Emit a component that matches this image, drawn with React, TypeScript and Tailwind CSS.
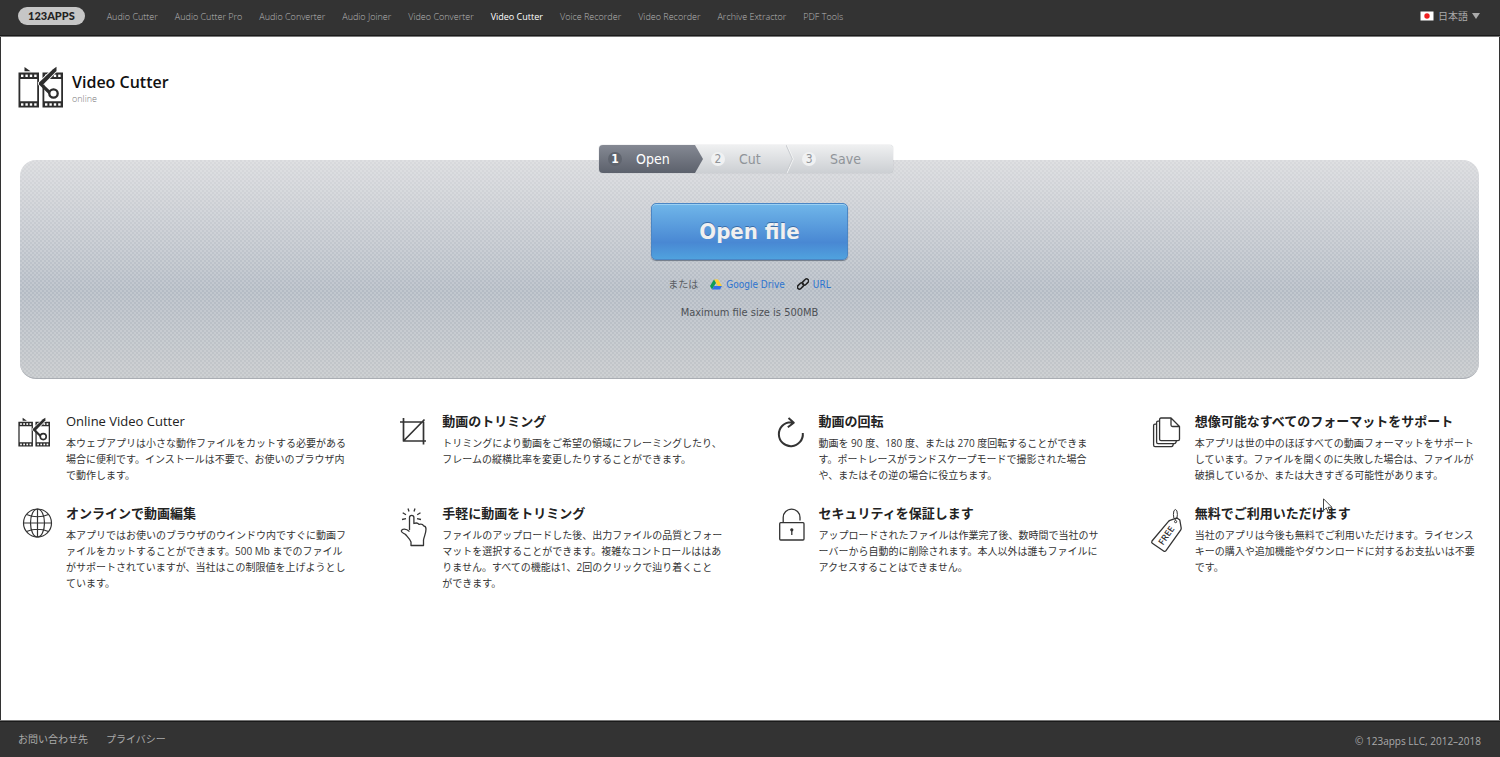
import type { ReactNode } from 'react';

const navItems = [
  'Audio Cutter',
  'Audio Cutter Pro',
  'Audio Converter',
  'Audio Joiner',
  'Video Converter',
  'Video Cutter',
  'Voice Recorder',
  'Video Recorder',
  'Archive Extractor',
  'PDF Tools',
];

function FilmIcon({ className }: { className?: string }) {
  const holes = [3, 7.4, 11.8, 16.2];
  return (
    <svg viewBox="0 0 45 42" className={className} aria-hidden="true">
      {[0, 24].map((x) => (
        <g key={x} transform={`translate(${x} 0)`}>
          <path d="M.5 6.5H21V41.5H.5ZM2.3 13V35.3H19.2V13Z" fill="#2d2d2d" fillRule="evenodd" />
          {holes.map((h) => (
            <g key={h} fill="#fff">
              <rect x={h} y="8.6" width="2.4" height="2.4" />
              <rect x={h} y="37.3" width="2.4" height="2.4" />
            </g>
          ))}
        </g>
      ))}
      <path d="M6.5 1L12.5 5.3H6.5Z" fill="#2d2d2d" />
      <path d="M38.5 .8V5L25.2 18.6L21 18.4L20.8 16.8L35 3.2Z" fill="#2d2d2d" stroke="#fff" strokeWidth="1.8" />
      <path d="M38.5 .8V5L25.2 18.6L21 18.4L20.8 16.8L35 3.2Z" fill="#2d2d2d" />
      <path d="M21.8 17.2L32 27" stroke="#2d2d2d" strokeWidth="3.2" />
      <circle cx="35.5" cy="27.5" r="4.2" stroke="#2d2d2d" strokeWidth="2.3" fill="#fff" />
    </svg>
  );
}

function LineIcon({ children, width = 1.3 }: { children: ReactNode; width?: number }) {
  return (
    <svg
      viewBox="0 0 40 46"
      className="h-[46px] w-10"
      fill="none"
      stroke="#333"
      strokeWidth={width}
      strokeLinejoin="round"
      aria-hidden="true"
    >
      {children}
    </svg>
  );
}

const features: { title: string; text: string; icon: ReactNode }[] = [
  {
    title: 'Online Video Cutter',
    text: '本ウェブアプリは小さな動作ファイルをカットする必要がある\n場合に便利です。インストールは不要で、お使いのブラウザ内\nで動作します。',
    icon: <FilmIcon className="mt-px h-[30px] w-8" />,
  },
  {
    title: '動画のトリミング',
    text: 'トリミングにより動画をご希望の領域にフレーミングしたり、\nフレームの縦横比率を変更したりすることができます。',
    icon: (
      <LineIcon width={1.7}>
        <path d="M9.5 2V25H32M6 6H29.5V28.5M9.5 25L30.5 3.5" />
      </LineIcon>
    ),
  },
  {
    title: '動画の回転',
    text: '動画を 90 度、180 度、または 270 度回転することができま\nす。ポートレースがランドスケープモードで撮影された場合\nや、またはその逆の場合に役立ちます。',
    icon: (
      <LineIcon width={2}>
        <path d="M31.8 17A12 12 0 1 1 20 6.2L22.5 6.7M17.5 2L22.8 6.7L16.8 11.3" />
      </LineIcon>
    ),
  },
  {
    title: '想像可能なすべてのフォーマットをサポート',
    text: '本アプリは世の中のほぼすべての動画フォーマットをサポート\nしています。ファイルを開くのに失敗した場合は、ファイルが\n破損しているか、または大きすぎる可能性があります。',
    icon: (
      <LineIcon>
        <path d="M14 2H24L32.5 10.5V23.3Q32.5 24.7 31 24.7H14Q12.6 24.7 12.6 23.3V3.4Q12.6 2 14 2ZM24 2V9Q24 10.5 25.5 10.5H32.5" />
        <path d="M12.6 5.2H11Q9.6 5.2 9.6 6.6V26Q9.6 27.6 11 27.6H27.5Q29 27.6 29.4 24.7" />
        <path d="M9.6 8.2H8Q6.6 8.2 6.6 9.6V29Q6.6 30.6 8 30.6H24.5Q26 30.6 26.4 27.6" />
      </LineIcon>
    ),
  },
  {
    title: 'オンラインで動画編集',
    text: '本アプリではお使いのブラウザのウインドウ内ですぐに動画フ\nァイルをカットすることができます。500 Mb までのファイル\nがサポートされていますが、当社はこの制限値を上げようとし\nています。',
    icon: (
      <LineIcon width={1.2}>
        <circle cx="19.5" cy="15" r="14" />
        <ellipse cx="19.5" cy="15" rx="7" ry="14" />
        <path d="M19.5 1V29M5.5 15H33.5M8.5 6.5Q19.5 11 30.5 6.5M8.5 23.5Q19.5 19 30.5 23.5" />
      </LineIcon>
    ),
  },
  {
    title: '手軽に動画をトリミング',
    text: 'ファイルのアップロードした後、出力ファイルの品質とフォー\nマットを選択することができます。複雑なコントロールははあ\nりません。すべての機能は1、2回のクリックで辿り着くこと\nができます。',
    icon: (
      <LineIcon>
        <path d="M15.5 22V9.5A2.2 2.2 0 0 1 19.9 9.5V15.5C22 14.7 24 15 25 16.3C27 15.8 29 16.3 29.5 17.8C31.3 17.9 32 19 32 21C32 26 30 28.5 29.5 32V37.5H17V34C15.5 30.5 13.5 29 11.5 26.5C10 25.3 7.5 25 7.3 23C8.1 20.5 12 20.4 15.5 23.5" />
        <path d="M14 .5L15 3.5M21 .5L20 3.5M8.7 4.7L12 6.7M26.5 4.7L23.2 6.7M8 11.5L12 10.7M27 11.5L23 10.7" />
      </LineIcon>
    ),
  },
  {
    title: 'セキュリティを保証します',
    text: 'アップロードされたファイルは作業完了後、数時間で当社のサ\nーバーから自動的に削除されます。本人以外は誰もファイルに\nアクセスすることはできません。',
    icon: (
      <LineIcon>
        <rect x="8.7" y="14.7" width="24.3" height="17.3" rx="1" />
        <path d="M12.2 14.5V9.5A8.4 8.4 0 0 1 29 9.5V12.5M20.8 21.5V27" />
        <circle cx="20.8" cy="21.8" r="1" fill="#333" />
      </LineIcon>
    ),
  },
  {
    title: '無料でご利用いただけます',
    text: '当社のアプリは今後も無料でご利用いただけます。ライセンス\nキーの購入や追加機能やダウンロードに対するお支払いは不要\nです。',
    icon: (
      <LineIcon>
        <path d="M5 33L21.3 13.6Q22 12.7 23 12.3L30 9.9L32.8 12L34.2 20Q34.3 21.2 33.6 22.2L19 42.6Q18 44 16.6 43L5.3 35.3Q4.2 34.3 5 33Z" />
        <ellipse cx="28.4" cy="6.5" rx="2" ry="5" strokeWidth="1" />
        <circle cx="28.6" cy="13.6" r="1.1" strokeWidth="1" />
        <text
          x="19.5"
          y="30.5"
          textAnchor="middle"
          transform="rotate(-55 19.5 27.5)"
          fill="#333"
          stroke="none"
          fontSize="9"
          fontWeight="600"
          fontFamily="Open Sans, sans-serif"
        >
          FREE
        </text>
      </LineIcon>
    ),
  },
];

function Step({ number, label, active }: { number: number; label: string; active?: boolean }) {
  return (
    <li
      aria-current={active ? 'step' : undefined}
      className={
        active
          ? 'flex w-26 items-center gap-3.5 bg-linear-to-b from-[#858993] to-[#5c616c] pl-[9px] text-white [clip-path:polygon(0_0,calc(100%-8px)_0,100%_50%,calc(100%-8px)_100%,0_100%)]'
          : 'flex items-center gap-3.5 pl-2 text-[#909499]'
      }
    >
      <span
        className={
          active
            ? 'flex size-3.5 items-center justify-center rounded-full bg-[#5f646e] text-xs font-bold'
            : 'flex size-3.5 items-center justify-center rounded-full bg-[#f0f1f2] text-xs'
        }
      >
        {number}
      </span>
      <span className="text-sm leading-none">{label}</span>
    </li>
  );
}

function Header() {
  return (
    <header className="flex h-[37px] items-center border-b border-[#777] bg-[#333] px-[18px] pb-1 shadow-[inset_0_-1px_0_#1a1a1a]">
      <a
        href="#"
        className="flex h-[18px] items-center rounded-full bg-[#c6c6c6] px-2.5 font-[Lato,sans-serif] text-[11px] font-black text-[#222]"
      >
        123APPS
      </a>
      <nav className="ml-[22px] flex gap-[17px] pt-0.5 text-[9px] font-light">
        {navItems.map((item) => (
          <a
            key={item}
            href="#"
            className={item === 'Video Cutter' ? 'font-normal text-white' : 'text-[#b8b8b8]'}
          >
            {item}
          </a>
        ))}
      </nav>
      <label className="ml-auto flex items-center gap-1 pr-0.5 text-[10px] text-[#aaa]">
        <svg viewBox="0 0 14 10" className="h-2.5 w-3.5" aria-hidden="true">
          <rect x=".5" y=".5" width="13" height="9" fill="#fff" />
          <circle cx="7" cy="5" r="2.7" fill="#f02020" />
        </svg>
        <select aria-label="日本語" className="appearance-none bg-transparent outline-none">
          <option>日本語</option>
        </select>
        <svg viewBox="0 0 8 6" className="h-1.5 w-2" aria-hidden="true">
          <path d="M0 0H8L4 6Z" fill="#aaa" />
        </svg>
      </label>
    </header>
  );
}

function OpenPanel() {
  return (
    <section className="mr-5 ml-[19px] mt-[52px] flex flex-col items-center rounded-2xl border-b border-[#a9adb3] bg-[conic-gradient(#ffffff2c_25%,transparent_0_50%,#ffffff2c_0_75%,transparent_0),linear-gradient(#d8d9dc,#b4bbc4_60%,#c4c7ca)] bg-size-[4px_4px,100%_100%] pb-[57px] font-['DejaVu_Sans_Condensed','Noto_Sans_CJK_JP',sans-serif]">
      <ol className="-mt-[15px] mr-[7px] flex h-7 w-[294px] overflow-hidden rounded-[4px] bg-linear-to-b from-[#eff0f1] to-[#cccfd3] shadow-[0_0_1px_#8b9097]">
        <Step number={1} label="Open" active />
        <Step number={2} label="Cut" />
        <li aria-hidden="true" className="ml-auto">
          <svg viewBox="0 0 8 28" className="h-7 w-2" fill="none">
            <path d="M1 0L7.3 14L1 28" stroke="#f4f5f5" />
            <path d="M0 0L6.3 14L0 28" stroke="#c9ccd0" />
          </svg>
        </li>
        <Step number={3} label="Save" />
        <li aria-hidden="true" className="w-8" />
      </ol>
      <button
        type="button"
        className="mt-[30px] h-[57px] w-[197px] rounded-[5px] border border-[#4b86c4] bg-linear-to-b from-[#70b6e9] via-[#4988d3] via-70% to-[#50a2de] text-[22px] font-bold text-[#f0f0f0] shadow-[inset_0_1px_0_#9bd0f3,0_1px_1px_#6d7887] [text-shadow:0_-1px_0_#3a6ca8]"
      >
        Open file
      </button>
      <div className="mt-4 flex h-4 items-center text-[10px] text-[#5a5d62]">
        <span>または</span>
        <a href="#" className="ml-3 flex items-center gap-1 text-[#2d74cf]">
          <svg viewBox="0 0 12 11" className="h-[11px] w-3" aria-hidden="true">
            <path d="M4 .5H8L12 7H8Z" fill="#ffcf30" />
            <path d="M4 .5L0 7L2 10.5L6 4Z" fill="#119c55" />
            <path d="M4 7H12L10 10.5H2Z" fill="#3370e6" />
          </svg>
          Google Drive
        </a>
        <a href="#" className="ml-3 flex items-center gap-1 text-[#2d74cf]">
          <svg
            viewBox="0 0 12 12"
            className="size-3"
            fill="none"
            stroke="#222"
            strokeWidth="1.5"
            aria-hidden="true"
          >
            <rect x="5" y="2" width="7" height="4" rx="2" transform="rotate(-45 8.5 4)" />
            <rect x="0" y="6" width="7" height="4" rx="2" transform="rotate(-45 3.5 8)" />
          </svg>
          URL
        </a>
      </div>
      <p className="mt-[13px] text-[11px] leading-4 text-[#4d5055]">Maximum file size is 500MB</p>
    </section>
  );
}

export default function App() {
  return (
    <div
      lang="ja"
      className="flex min-h-screen flex-col bg-white font-['Open_Sans','Noto_Sans_CJK_JP',sans-serif] text-[#222]"
    >
      <Header />
      <main className="flex-1 border-x border-[#333]">
        <div className="flex items-center gap-[9px] px-[17px] pt-[29px]">
          <FilmIcon className="h-[42px] w-[45px]" />
          <div className="pt-1">
            <h1 className="text-base leading-5 font-semibold text-[#111]">Video Cutter</h1>
            <p className="text-[9px] leading-[14px] font-light text-[#777]">online</p>
          </div>
        </div>

        <OpenPanel />

        <section className="grid grid-cols-4 gap-x-[41px] gap-y-[21px] px-[17px] pt-[33px] pb-10">
          {features.map((feature) => (
            <article key={feature.title} className="flex">
              <div className="h-12 w-12 shrink-0 pt-1">{feature.icon}</div>
              <div>
                <h2
                  className={
                    feature.title === 'Online Video Cutter'
                      ? 'text-[13px] leading-[18px] font-medium whitespace-nowrap'
                      : 'text-[13px] leading-[18px] font-bold whitespace-nowrap'
                  }
                >
                  {feature.title}
                </h2>
                <p className="mt-[5px] text-[10px] leading-4 whitespace-pre text-[#333]">{feature.text}</p>
              </div>
            </article>
          ))}
        </section>
      </main>

      {/* Mouse pointer */}
      <svg viewBox="0 0 10 15" className="absolute top-[498px] left-[1323px] h-[15px] w-2.5" aria-hidden="true">
        <path d="M.5 .8V12.5L3.3 10L5.3 14.3L7 13.5L5 9.3H9Z" fill="#fff" stroke="#333" strokeWidth=".9" />
      </svg>

      <footer className="flex h-[37px] items-center justify-between border-t border-[#777] bg-[#333] px-[18px] text-[10px] text-[#aaa] shadow-[inset_0_1px_0_#1a1a1a]">
        <div className="flex gap-[18px]">
          <a href="#">お問い合わせ先</a>
          <a href="#">プライバシー</a>
        </div>
        <p className="pt-1 pr-px">© 123apps LLC, 2012–2018</p>
      </footer>
    </div>
  );
}
